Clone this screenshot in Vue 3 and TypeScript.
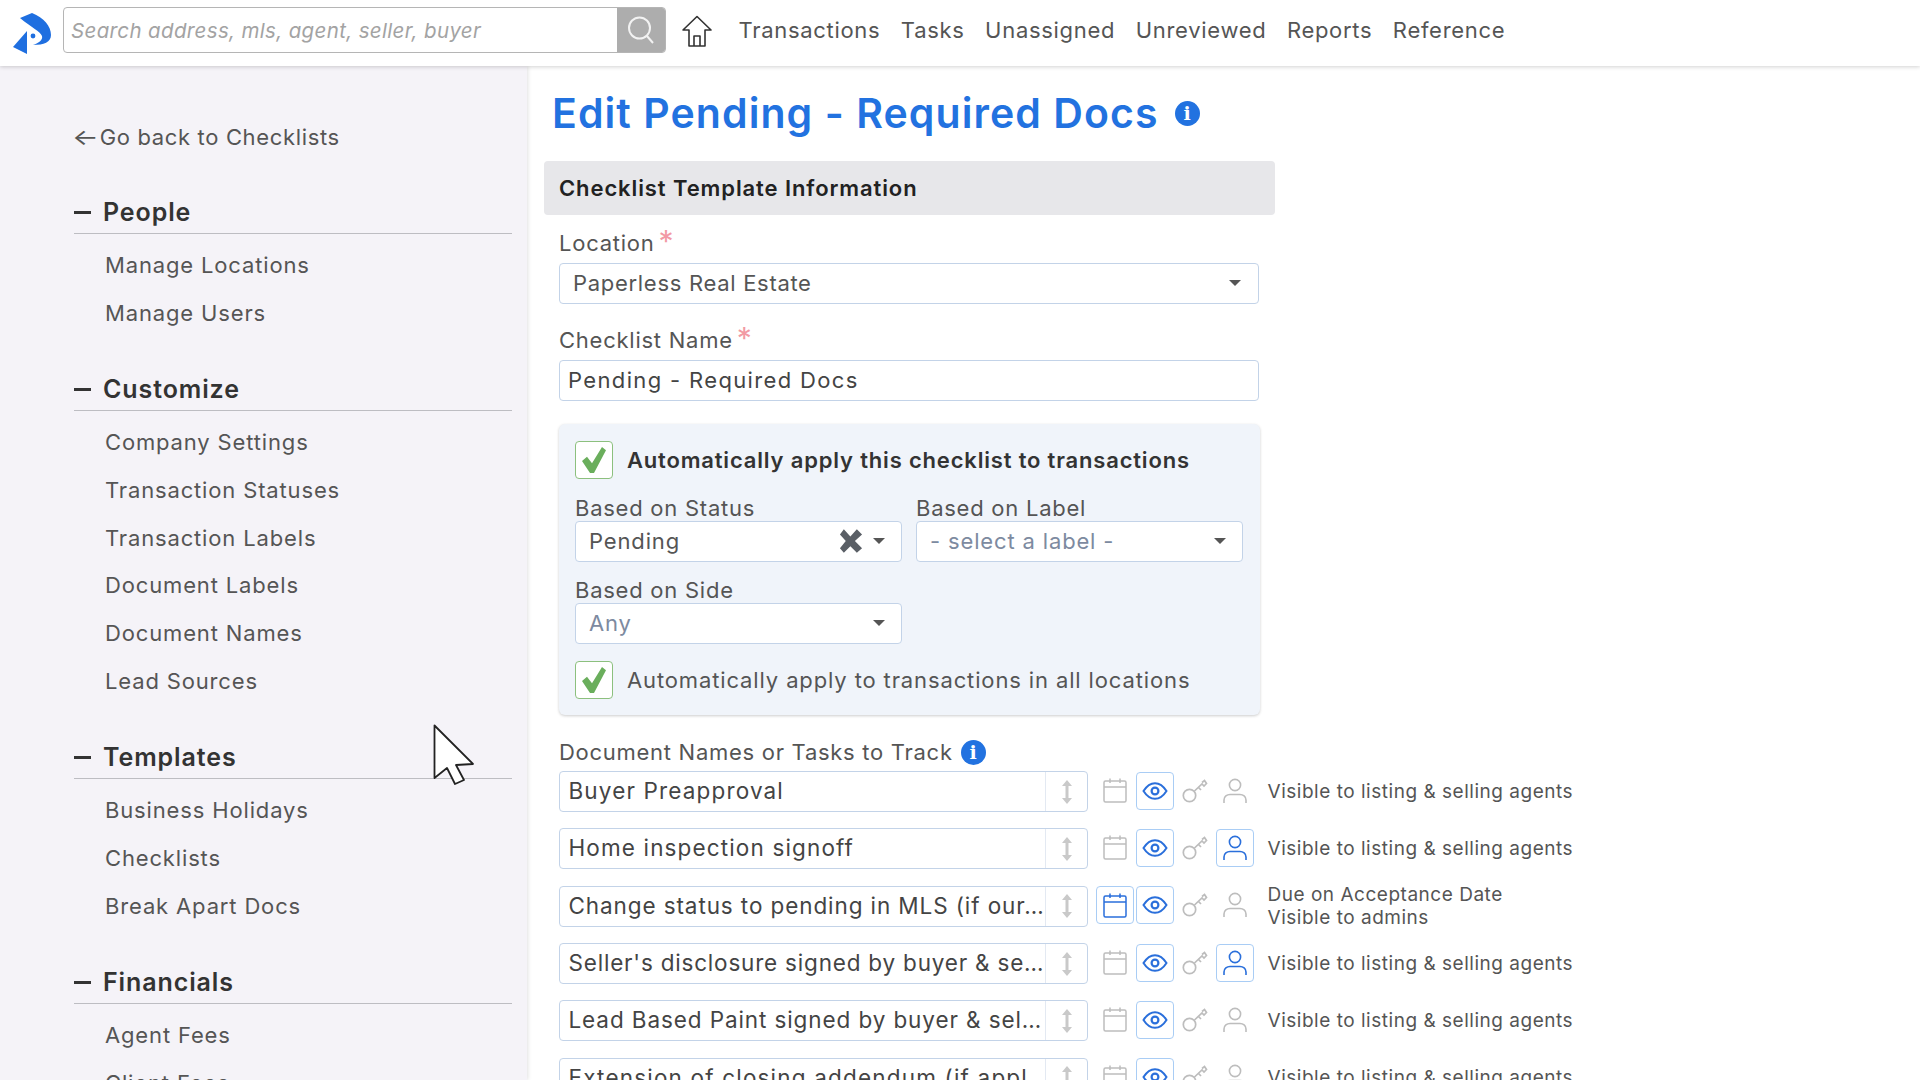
<script setup lang="ts">
const navItems: string[] = ['Transactions', 'Tasks', 'Unassigned', 'Unreviewed', 'Reports', 'Reference']

interface Section { title: string; items: string[] }
const sections: Section[] = [
  { title: 'People', items: ['Manage Locations', 'Manage Users'] },
  { title: 'Customize', items: ['Company Settings', 'Transaction Statuses', 'Transaction Labels', 'Document Labels', 'Document Names', 'Lead Sources'] },
  { title: 'Templates', items: ['Business Holidays', 'Checklists', 'Break Apart Docs'] },
  { title: 'Financials', items: ['Agent Fees', 'Client Fees'] },
]

interface Row { name: string; track: number; cal?: boolean; user?: boolean; notes: string[] }
const rows: Row[] = [
  { name: 'Buyer Preapproval', track: 1.15, notes: ['Visible to listing & selling agents'] },
  { name: 'Home inspection signoff', track: 1.14, user: true, notes: ['Visible to listing & selling agents'] },
  { name: 'Change status to pending in MLS (if our…', track: 0.9, cal: true, notes: ['Due on Acceptance Date', 'Visible to admins'] },
  { name: "Seller's disclosure signed by buyer & se…", track: 0.8, user: true, notes: ['Visible to listing & selling agents'] },
  { name: 'Lead Based Paint signed by buyer & sel…', track: 0.9, notes: ['Visible to listing & selling agents'] },
  { name: 'Extension of closing addendum (if appl', track: 1.18, notes: ['Visible to listing & selling agents'] },
]
</script>

<template>
  <div class="page">
    <header class="topbar">
      <svg class="logo" width="40" height="42" viewBox="12 8 40 42">
        <path d="M13 43 L27 27 L27 50 Z" fill="#1f6fe0" />
        <path d="M20 14 L32 9 C44 14 51 22 51 31 C51 38 44 41 33 41 C39 39 43 36 42 32 C40 27 32 24 20 14 Z" fill="#1f6fe0" />
        <circle cx="33" cy="32" r="2.4" fill="#1f6fe0" />
      </svg>
      <div class="search">
        <span class="search-text">Search address, mls, agent, seller, buyer</span>
        <span class="search-btn">
          <svg width="28" height="30" viewBox="0 0 28 30" fill="none" stroke="#f2f2f2" stroke-width="2">
            <circle cx="12.5" cy="13" r="10.5" />
            <path d="M20 21 L26 28" />
          </svg>
        </span>
      </div>
      <svg class="home" width="30" height="33" viewBox="0 0 30 33" fill="none" stroke="#333" stroke-width="1.6" stroke-linejoin="round">
        <path d="M15 1.5 L29 15 H23 V31 H7 V15 H1 Z" />
        <path d="M12 31 V21 H18 V31" />
      </svg>
      <nav class="nav">
        <a v-for="n in navItems" :key="n" class="nav-item">{{ n }}</a>
      </nav>
    </header>

    <div class="body">
      <aside class="side">
        <a class="back"><span class="arrow">←</span><span class="back-text">Go back to Checklists</span></a>
        <section v-for="s in sections" :key="s.title" class="side-sec">
          <h3 class="side-head"><span class="dash"></span>{{ s.title }}</h3>
          <ul class="side-list">
            <li v-for="i in s.items" :key="i">{{ i }}</li>
          </ul>
        </section>
      </aside>

      <main class="main">
        <h1 class="title">
          Edit Pending - Required Docs
          <span class="info info-lg">i</span>
        </h1>
        <div class="band">Checklist Template Information</div>

        <div class="form">
          <label class="lbl lbl-first">Location<span class="req">*</span></label>
          <div class="select">
            <span>Paperless Real Estate</span><span class="caret"></span>
          </div>
          <label class="lbl">Checklist Name<span class="req">*</span></label>
          <div class="select"><span class="ls-name">Pending - Required Docs</span></div>

          <div class="panel">
            <div class="check-row">
              <span class="check">
                <svg width="26" height="28" viewBox="0 0 26 26" preserveAspectRatio="none"><path d="M1 14 L6 10 L11 16 L21 1 L25 4 L13 25 L9 25 Z" fill="#6aae5c" /></svg>
              </span>
              <strong class="check-lbl">Automatically apply this checklist to transactions</strong>
            </div>
            <div class="pair">
              <div class="field">
                <div class="mini-lbl">Based on Status</div>
                <div class="select sel-sm">
                  <span>Pending</span>
                  <span class="right">
                    <svg width="26" height="26" viewBox="2 1 19 20"><path d="M3 6 L6 2 L11 7.5 L16 2 L20 6 L14.5 11 L20 16.5 L16 20 L11 15 L6 20 L3 16.5 L7.5 11 Z" fill="#5a5f66" /></svg>
                    <span class="caret caret-static"></span>
                  </span>
                </div>
              </div>
              <div class="field">
                <div class="mini-lbl">Based on Label</div>
                <div class="select sel-sm muted"><span>- select a label -</span><span class="caret"></span></div>
              </div>
            </div>
            <div class="field field-side">
              <div class="mini-lbl">Based on Side</div>
              <div class="select sel-sm muted"><span>Any</span><span class="caret"></span></div>
            </div>
            <div class="check-row check-row-2">
              <span class="check">
                <svg width="26" height="28" viewBox="0 0 26 26" preserveAspectRatio="none"><path d="M1 14 L6 10 L11 16 L21 1 L25 4 L13 25 L9 25 Z" fill="#6aae5c" /></svg>
              </span>
              <span class="check-lbl check-plain">Automatically apply to transactions in all locations</span>
            </div>
          </div>

          <div class="doc-lbl">Document Names or Tasks to Track <span class="info info-sm">i</span></div>

          <div v-for="r in rows" :key="r.name" class="row">
            <div class="row-input">
              <span class="row-name" :style="{ letterSpacing: r.track + 'px' }">{{ r.name }}</span>
              <span class="row-handle">
                <svg width="12" height="24" viewBox="0 0 12 24" fill="#c9c9c9">
                  <path d="M6 0 L11 6 H7.5 V18 H11 L6 24 L1 18 H4.5 V6 H1 Z" />
                </svg>
              </span>
            </div>
            <div class="cells">
              <span class="cell" :class="{ on: r.cal }">
                <svg width="24" height="25" viewBox="0 0 24 25" fill="none" stroke="currentColor" stroke-width="1.5">
                  <rect x="1" y="3" width="22" height="21" rx="1.5" />
                  <path d="M1 9 H23 M7 0.5 V5 M17 0.5 V5" />
                </svg>
              </span>
              <span class="cell on">
                <svg width="26" height="18" viewBox="0 0 26 18" fill="none" stroke="currentColor" stroke-width="2">
                  <path d="M1.5 9 C5 3.5 9 1.2 13 1.2 C17 1.2 21 3.5 24.5 9 C21 14.5 17 16.8 13 16.8 C9 16.8 5 14.5 1.5 9 Z" />
                  <circle cx="13" cy="9" r="3.4" stroke-width="2.2" />
                </svg>
              </span>
              <span class="cell">
                <svg width="26" height="24" viewBox="0 0 26 24" fill="none" stroke="currentColor" stroke-width="1.7">
                  <circle cx="7.5" cy="16.5" r="6.2" />
                  <path d="M12.5 12 L20 5 L22 7 L24.5 4.5 L22.5 1.5 L20 3.5" />
                  <path d="M16.5 8.5 L19 11" />
                </svg>
              </span>
              <span class="cell" :class="{ on: r.user }">
                <svg width="24" height="26" viewBox="0 0 24 26" fill="none" stroke="currentColor" stroke-width="1.6">
                  <circle cx="12" cy="7" r="5.6" />
                  <path d="M1 25 V22 C1 18.5 4 16.5 7 16.5 H17 C20 16.5 23 18.5 23 22 V25" />
                </svg>
              </span>
            </div>
            <div class="notes">
              <div v-for="n in r.notes" :key="n">{{ n }}</div>
            </div>
          </div>
        </div>
      </main>
    </div>

    <svg class="cursor" width="42" height="62" viewBox="0 0 42 62">
      <path d="M1.5 1.5 L1.5 54 L14 44 L22 60 L31 56 L23 41 L40 40 Z" fill="#fff" stroke="#222" stroke-width="1.8" stroke-linejoin="round" />
    </svg>
  </div>
</template>

<style>
html, body { margin: 0; height: 100%; overflow: hidden; background: #fff; }
</style>

<style scoped>
.page {
  position: relative;
  width: 1920px;
  height: 1080px;
  overflow: hidden;
  background: #fff;
  font-family: Inter, "Liberation Sans", sans-serif;
  color: #444;
}
.topbar {
  position: relative;
  z-index: 2;
  display: flex;
  align-items: center;
  height: 66px;
  background: #fff;
  box-shadow: 0 1px 4px rgba(0, 0, 0, 0.18);
  box-sizing: border-box;
  padding-left: 12px;
}
.logo { flex: none; }
.search {
  display: flex;
  align-items: stretch;
  margin-left: 11px;
  width: 603px;
  height: 46px;
  margin-top: -6px;
  box-sizing: border-box;
  border: 1.5px solid #b5b5b5;
  border-radius: 4px;
  overflow: hidden;
}
.search-text {
  flex: 1;
  padding-left: 7px;
  line-height: 45px;
  font-style: italic;
  font-size: 20.5px;
  letter-spacing: 0.36px;
  color: #a3a3a3;
  white-space: nowrap;
}
.search-btn {
  flex: none;
  width: 48px;
  background: #adadad;
  display: flex;
  align-items: center;
  justify-content: center;
}
.home { flex: none; margin-left: 16px; margin-top: -3px; }
.nav { display: flex; margin-left: 26.5px; gap: 20.5px; margin-top: -6px; }
.nav-item { font-size: 22px; letter-spacing: 0.7px; color: #555; white-space: nowrap; }

.body { display: flex; height: 1014px; }
.side {
  flex: none;
  width: 527px;
  box-sizing: border-box;
  padding: 47px 15px 0 74px;
  background: #f5f3f8;
  box-shadow: 1px 0 4px rgba(0, 0, 0, 0.12);
}
.back { display: flex; align-items: center; height: 48px; font-size: 22px; letter-spacing: 0.65px; color: #555; margin-bottom: 30px; white-space: nowrap; }
.arrow { font-size: 28px; line-height: 1; letter-spacing: 0; margin-left: -2px; transform: scaleY(0.8); }
.back-text { margin-left: 1px; }
.side-sec { margin-bottom: 30.5px; }
.side-head {
  margin: 0;
  height: 42px;
  line-height: 42px;
  border-bottom: 1.5px solid #bdbdc2;
  font-size: 25px;
  font-weight: 600;
  letter-spacing: 0.9px;
  color: #333;
  display: flex;
  align-items: center;
}
.dash { width: 17px; height: 3px; background: #333; margin-right: 12px; }
.side-list { list-style: none; margin: 0; padding: 8px 0 0 31px; }
.side-list li { height: 47.8px; line-height: 47.8px; font-size: 22px; letter-spacing: 0.85px; color: #555; white-space: nowrap; }

.main { flex: 1; padding: 17px 0 0 17px; }
.title {
  margin: 0 0 18px;
  padding-left: 8px;
  height: 60px;
  line-height: 60px;
  font-size: 41px;
  font-weight: 600;
  letter-spacing: 1.07px;
  color: #2272e0;
  display: flex;
  align-items: center;
  gap: 16px;
  white-space: nowrap;
}
.band {
  width: 731px;
  height: 54px;
  line-height: 54px;
  box-sizing: border-box;
  padding-left: 15px;
  background: #e7e7ea;
  border-radius: 4px;
  font-size: 22px;
  font-weight: 600;
  letter-spacing: 0.9px;
  color: #222;
}
.form { padding-left: 15px; width: 1300px; }
.lbl { display: block; height: 40px; line-height: 40px; margin-top: 16px; font-size: 22px; letter-spacing: 0.75px; color: #555; }
.lbl-first { margin-top: 8px; }
.req { color: #f29aa4; font-size: 30px; margin-left: 4px; position: relative; top: 1px; line-height: 1; letter-spacing: 0; }
.select {
  position: relative;
  display: flex;
  align-items: center;
  justify-content: space-between;
  box-sizing: border-box;
  width: 700px;
  height: 41px;
  padding: 0 17px 1px 13px;
  background: #fff;
  border: 1.5px solid #c3d3e8;
  border-radius: 4px;
  font-size: 22px;
  letter-spacing: 0.7px;
  color: #555;
}
.ls-name { margin-left: -5px; letter-spacing: 1.35px; color: #444; }
.caret {
  width: 0;
  height: 0;
  border-left: 6px solid transparent;
  border-right: 6px solid transparent;
  border-top: 6px solid #555;
}
.panel {
  box-sizing: border-box;
  width: 701px;
  height: 291px;
  margin-top: 23px;
  padding: 17px 16px;
  background: #f0f4fa;
  border-radius: 6px;
  box-shadow: 0 1px 3px rgba(0, 0, 0, 0.2);
}
.check-row { display: flex; align-items: center; height: 38px; }
.check-row-2 { margin-top: 17px; }
.check {
  flex: none;
  width: 38px;
  height: 38px;
  box-sizing: border-box;
  border: 1.5px solid #8cc07e;
  border-radius: 4px;
  background: #fff;
  display: flex;
  align-items: center;
  justify-content: center;
}
.check-lbl { margin-left: 14px; font-size: 22px; font-weight: 600; letter-spacing: 0.82px; color: #333; white-space: nowrap; }
.check-plain { font-weight: 400; letter-spacing: 0.87px; color: #555; }
.pair { display: flex; gap: 14px; margin-top: 16px; }
.field { width: 327px; }
.field-side { margin-top: 15px; }
.mini-lbl { height: 26px; line-height: 26px; font-size: 22px; letter-spacing: 0.75px; color: #555; white-space: nowrap; }
.sel-sm { width: 100%; padding: 0 16px 1px 13px; letter-spacing: 0.85px; }
.muted { color: #7d8aa0; }
.right { display: flex; align-items: center; gap: 9px; }
.caret-static { flex: none; }

.doc-lbl {
  display: flex;
  align-items: center;
  gap: 8px;
  margin-top: 21px;
  margin-bottom: 3px;
  height: 32px;
  font-size: 22px;
  letter-spacing: 0.72px;
  color: #555;
}
.row { display: flex; align-items: center; height: 41px; margin-bottom: 16.35px; }
.row-input {
  flex: none;
  display: flex;
  width: 529px;
  height: 41px;
  box-sizing: border-box;
  background: #fff;
  border: 1.5px solid #c3d3e8;
  border-radius: 4px;
}
.row-name {
  flex: 1;
  min-width: 0;
  padding-left: 8.5px;
  line-height: 38px;
  font-size: 22.5px;
  color: #444;
  white-space: nowrap;
  overflow: hidden;
}
.row-handle {
  flex: none;
  width: 42px;
  box-sizing: border-box;
  border-left: 1px solid #e3e9f2;
  display: flex;
  align-items: center;
  justify-content: center;
}
.cells { display: flex; gap: 2px; margin-left: 7.5px; margin-top: -2px; flex: none; }
.cell {
  width: 38px;
  height: 38px;
  box-sizing: border-box;
  border: 1.5px solid transparent;
  border-radius: 4px;
  display: flex;
  align-items: center;
  justify-content: center;
  color: #bdbdbd;
}
.cell.on { border-color: #a9cdf5; color: #2a6fdb; }
.notes { margin-left: 14px; font-size: 19px; line-height: 23px; letter-spacing: 0.52px; color: #555; white-space: nowrap; margin-top: -1px; }
.info {
  display: inline-flex;
  align-items: center;
  justify-content: center;
  border-radius: 50%;
  background: #2272e0;
  color: #fff;
  font-family: "DejaVu Serif", serif;
  font-weight: 700;
  flex: none;
  letter-spacing: 0;
}
.info-lg { width: 25px; height: 25px; font-size: 19px; line-height: 25px; }
.info-sm { width: 25px; height: 25px; font-size: 19px; line-height: 25px; }
.cursor { position: absolute; left: 433px; top: 724px; z-index: 3; }
</style>
